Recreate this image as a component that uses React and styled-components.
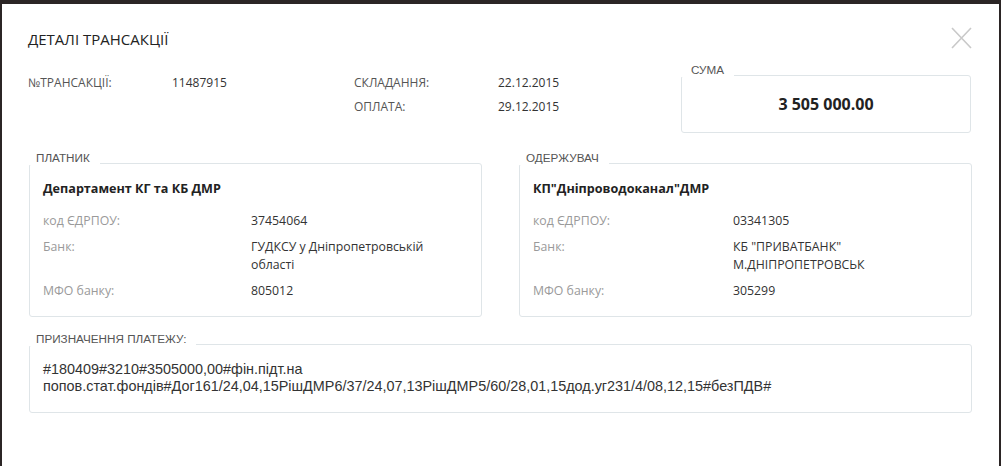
import React from "react";
import styled, { createGlobalStyle } from "styled-components";

const Global = createGlobalStyle`
  html, body { margin: 0; padding: 0; }
  body {
    background: #2b2525;
    height: 466px;
    overflow: hidden;
    font-family: "Open Sans", "Liberation Sans", sans-serif;
  }
`;

const Modal = styled.div`
  margin: 4px 2px 0;
  min-height: 462px;
  background: #fff;
  padding: 0 27px 0 26px;
  box-sizing: border-box;
`;

const Header = styled.div`
  display: flex;
  justify-content: space-between;
  align-items: center;
  height: 20px;
  padding-top: 25px;
`;

const Title = styled.h1`
  margin: 0;
  font-size: 15px;
  font-weight: 400;
  color: #222;
  line-height: 20px;
`;

const Close = styled.button`
  border: 0;
  background: none;
  padding: 0;
  width: 21px;
  height: 22px;
  margin-top: -2px;
  cursor: pointer;
  display: flex;
`;

const TopGrid = styled.div`
  display: grid;
  grid-template-columns: 326px 327px 290px;
  margin-top: 14px;
`;

const InfoCol = styled.div`
  display: flex;
  flex-direction: column;
  gap: 6px;
  padding-top: 11px;
`;

const InfoRow = styled.div`
  display: grid;
  grid-template-columns: 144px 1fr;
  font-size: 12px;
  line-height: 18px;
`;

const InfoLabel = styled.span`
  color: #555;
`;

const InfoValue = styled.span`
  color: #333;
`;

const Group = styled.section`
  display: flex;
  flex-direction: column;
`;

const Legend = styled.div`
  align-self: flex-start;
  position: relative;
  z-index: 1;
  background: #fff;
  font-family: "Liberation Sans", Arial, sans-serif;
  font-size: 11.7px;
  line-height: 14px;
  color: #555;
  padding: 0 10px 0 ${(p) => p.$padLeft || 8}px;
  margin-bottom: -2px;
`;

const Box = styled.div`
  border: 1px solid #dfe5e8;
  border-radius: 3px;
  box-sizing: border-box;
`;

const SumBox = styled(Box)`
  height: 58px;
  display: flex;
  align-items: center;
  justify-content: center;
  font-size: 16px;
  font-weight: 700;
  color: #222;
`;

const Parties = styled.div`
  display: grid;
  grid-template-columns: 1fr 1fr;
  gap: 37px;
  margin-top: 18px;
  margin-left: 1px;
`;

const PartyBox = styled(Box)`
  padding: 17px 13px 0;
  height: 154px;
`;

const PartyName = styled.div`
  font-size: 12.6px;
  font-weight: 700;
  color: #222;
  line-height: 16px;
  margin-bottom: 15px;
`;

const Rows = styled.div`
  display: flex;
  flex-direction: column;
  gap: 8px;
`;

const Row = styled.div`
  display: grid;
  grid-template-columns: ${(p) => p.$labelWidth}px 1fr;
  font-size: 12.3px;
  line-height: 18px;
`;

const RowLabel = styled.span`
  color: #9a9a9a;
`;

const RowValue = styled.span`
  color: #333;
`;

const Purpose = styled(Group)`
  margin-top: 15px;
  margin-left: 1px;
`;

const PurposeBox = styled(Box)`
  padding: 16px 13px 17px;
  font-family: "Liberation Sans", Arial, sans-serif;
  font-size: 14.4px;
  line-height: 17px;
  color: #333;
`;

const CloseIcon = () => (
  <svg width="21" height="22" viewBox="0 0 21 22">
    <path d="M1 1 L20 21 M20 1 L1 21" stroke="#c9c9c9" strokeWidth="1.6" fill="none" />
  </svg>
);

const Party = ({ title, name, code, bank, mfo, labelWidth }) => (
  <Group>
    <Legend $padLeft={7}>{title}</Legend>
    <PartyBox>
      <PartyName>{name}</PartyName>
      <Rows>
        <Row $labelWidth={labelWidth}>
          <RowLabel>код ЄДРПОУ:</RowLabel>
          <RowValue>{code}</RowValue>
        </Row>
        <Row $labelWidth={labelWidth}>
          <RowLabel>Банк:</RowLabel>
          <RowValue>{bank}</RowValue>
        </Row>
        <Row $labelWidth={labelWidth}>
          <RowLabel>МФО банку:</RowLabel>
          <RowValue>{mfo}</RowValue>
        </Row>
      </Rows>
    </PartyBox>
  </Group>
);

export default function App() {
  return (
    <>
      <Global />
      <Modal>
        <Header>
          <Title>ДЕТАЛІ ТРАНСАКЦІЇ</Title>
          <Close aria-label="close">
            <CloseIcon />
          </Close>
        </Header>
        <TopGrid>
          <InfoCol>
            <InfoRow>
              <InfoLabel>№ТРАНСАКЦІЇ:</InfoLabel>
              <InfoValue>11487915</InfoValue>
            </InfoRow>
          </InfoCol>
          <InfoCol>
            <InfoRow>
              <InfoLabel>СКЛАДАННЯ:</InfoLabel>
              <InfoValue>22.12.2015</InfoValue>
            </InfoRow>
            <InfoRow>
              <InfoLabel>ОПЛАТА:</InfoLabel>
              <InfoValue>29.12.2015</InfoValue>
            </InfoRow>
          </InfoCol>
          <Group>
            <Legend $padLeft={10}>СУМА</Legend>
            <SumBox>3 505 000.00</SumBox>
          </Group>
        </TopGrid>
        <Parties>
          <Party
            title="ПЛАТНИК"
            name="Департамент КГ та КБ ДМР"
            code="37454064"
            bank="ГУДКСУ у Дніпропетровській області"
            mfo="805012"
            labelWidth={208}
          />
          <Party
            title="ОДЕРЖУВАЧ"
            name={'КП"Дніпроводоканал"ДМР'}
            code="03341305"
            bank={'КБ "ПРИВАТБАНК" М.ДНІПРОПЕТРОВСЬК'}
            mfo="305299"
            labelWidth={200}
          />
        </Parties>
        <Purpose>
          <Legend $padLeft={7}>ПРИЗНАЧЕННЯ ПЛАТЕЖУ:</Legend>
          <PurposeBox>
            #180409#3210#3505000,00#фін.підт.на
            попов.стат.фондів#Дог161/24,04,15РішДМР6/37/24,07,13РішДМР5/60/28,01,15дод.уг231/4/08,12,15#безПДВ#
          </PurposeBox>
        </Purpose>
      </Modal>
    </>
  );
}
